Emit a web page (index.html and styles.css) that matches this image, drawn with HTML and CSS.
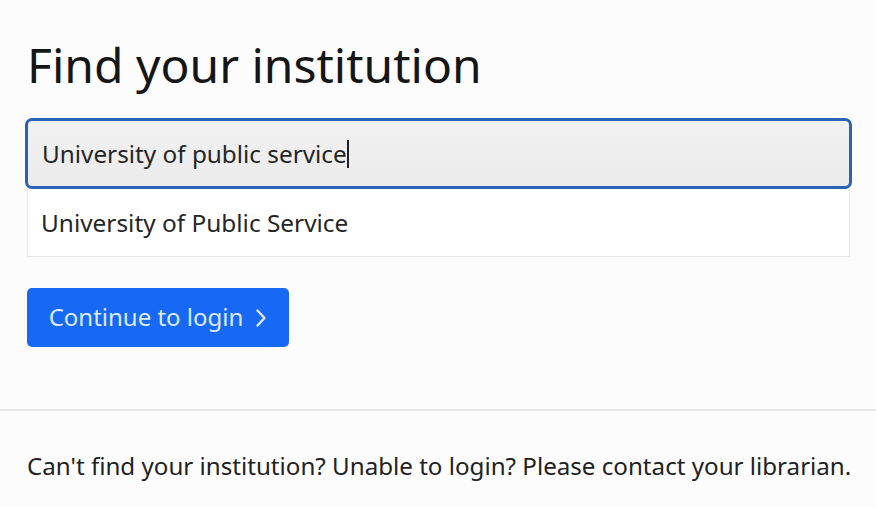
FILE: index.html
```html
<!DOCTYPE html>
<html lang="en">
<head>
<meta charset="utf-8">
<title>Find your institution</title>
<link rel="stylesheet" href="styles.css">
</head>
<body>
<main class="page">
  <section class="finder">
    <h1 class="title">Find your institution</h1>
    <div class="combo">
      <div class="search"><span class="search-text">University of public service</span><span class="caret"></span></div>
      <ul class="options">
        <li class="option">University of Public Service</li>
      </ul>
    </div>
    <button class="continue" type="button">Continue to login
      <svg class="chev" viewBox="0 0 12 20" width="12" height="20"><path d="M2.5 2.5 L9.5 10 L2.5 17.5" fill="none" stroke="currentColor" stroke-width="2.4" stroke-linecap="round" stroke-linejoin="round"/></svg>
    </button>
  </section>
  <hr class="divider">
  <p class="help">Can't find your institution? Unable to login? Please contact your librarian.</p>
</main>
</body>
</html>
```
FILE: styles.css
```css
* { box-sizing: border-box; }
html, body { margin: 0; padding: 0; }
body {
  background: #fcfcfc;
  font-family: "Noto Sans", "Open Sans", sans-serif;
  color: #1c1c1c;
  width: 876px;
  height: 507px;
  overflow: hidden;
}
.page { display: flex; flex-direction: column; }
.finder { padding: 34px 24px 0 25px; display: flex; flex-direction: column; }
.title {
  margin: 0 0 0 2px;
  font-weight: 400;
  font-size: 48px;
  line-height: 62px;
  color: #161616;
}
.combo { margin-top: 22px; display: flex; flex-direction: column; }
.search {
  height: 71px;
  border: 3px solid #2a62b4;
  border-radius: 7px;
  background: linear-gradient(#f1f1f1, #ebebeb);
  display: flex;
  align-items: center;
  padding-left: 14px;
  font-size: 24.3px;
  color: #262626;
}
.caret { display: inline-block; width: 2px; height: 28px; background: #222; margin-left: 0; }
.options {
  list-style: none;
  margin: 0 2px;
  padding: 0;
  background: #ffffff;
  border: 1px solid #e6e6e6;
  border-top: none;
}
.option { height: 67px; display: flex; align-items: center; padding-left: 13px; font-size: 24.4px; color: #262626; }
.continue {
  margin: 31px 0 0 2px;
  align-self: flex-start;
  width: 262px;
  height: 59px;
  border: none;
  border-radius: 5px;
  background: #1769f5;
  color: #dde9ff;
  font-family: inherit;
  font-size: 24px;
  display: flex;
  align-items: center;
  justify-content: center;
  gap: 12px;
  padding: 0 0 2px;
}
.chev { margin-top: 2px; }
.divider { margin: 62px 0 0; border: none; border-top: 2px solid #e8e8e8; }
.help { margin: 38px 0 0 27px; font-size: 24.15px; color: #222222; }
```
